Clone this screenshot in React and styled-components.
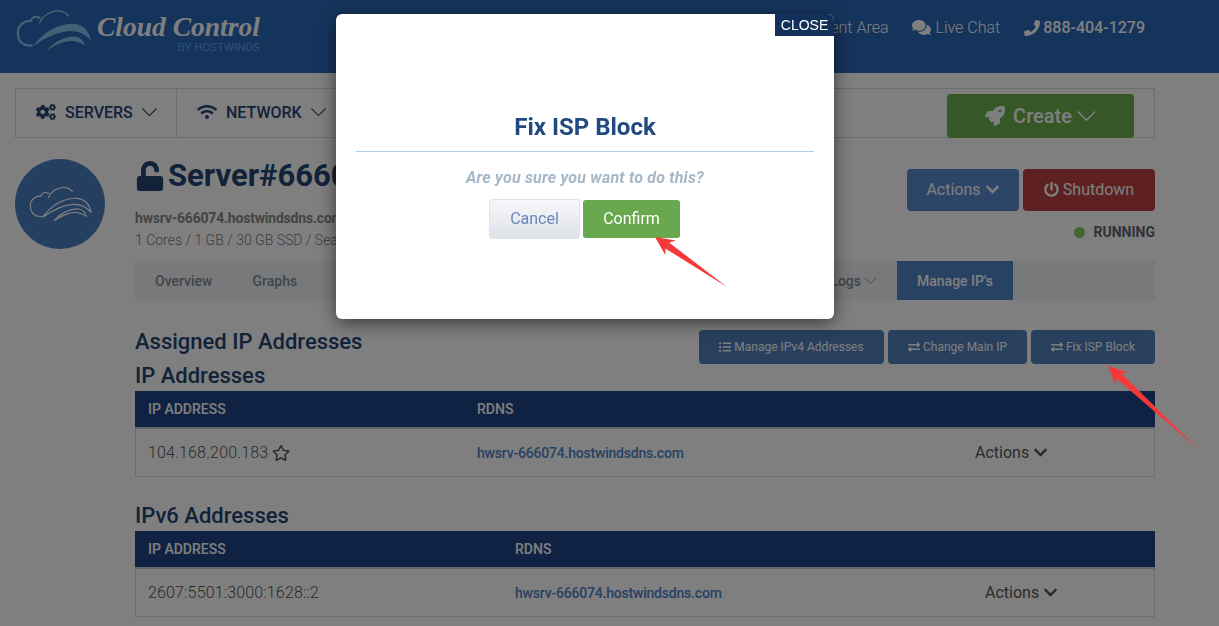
import React from "react";
import styled, { createGlobalStyle } from "styled-components";
import {
  FaChevronDown,
  FaCogs,
  FaComments,
  FaExchangeAlt,
  FaListUl,
  FaPhone,
  FaPowerOff,
  FaRegStar,
  FaRocket,
  FaUnlock,
  FaWifi,
} from "react-icons/fa";

const GlobalStyle = createGlobalStyle`
  html, body {
    margin: 0;
    height: 626px;
    overflow: hidden;
    background: #ffffff;
    font-family: Roboto, "Liberation Sans", sans-serif;
  }
  * {
    box-sizing: border-box;
  }
`;

const Page = styled.div`
  width: 1219px;
  height: 626px;
  overflow: hidden;
`;

const Header = styled.header`
  height: 73px;
  background: #2a68b8;
  display: flex;
  justify-content: space-between;
  padding: 0 74px 0 15px;
`;

const Logo = styled.div`
  display: flex;
  align-items: flex-start;
  gap: 5px;
  padding-top: 9px;
`;

const LogoText = styled.div`
  display: flex;
  flex-direction: column;
  align-items: flex-end;
`;

const LogoName = styled.span`
  margin-top: 2px;
  font-family: "Liberation Serif", serif;
  font-style: italic;
  font-weight: 700;
  font-size: 27.5px;
  line-height: 31px;
  color: #ffffff;
`;

const LogoBy = styled.span`
  margin-top: -1px;
  font-size: 11.5px;
  line-height: 13px;
  color: #5da2ec;
`;

const HeaderNav = styled.nav`
  display: flex;
  gap: 24px;
  padding-top: 18px;
`;

const HeaderLink = styled.a`
  display: flex;
  align-items: center;
  gap: ${(p) => (p.$bold ? 3 : 4)}px;
  height: 19px;
  font-size: 16px;
  font-weight: ${(p) => (p.$bold ? 500 : 300)};
  color: #ffffff;
  svg {
    font-size: ${(p) => (p.$bold ? 16 : 19)}px;
  }
`;

const NavBar = styled.div`
  margin: 15px 64px 0 15px;
  height: 50px;
  border: 1px solid #d8d8d8;
  display: flex;
  padding-right: 20px;
`;

const NavItem = styled.div`
  width: ${(p) => p.$width}px;
  display: flex;
  align-items: center;
  gap: 9px;
  padding: 0 0 2px 20px;
  border-right: 1px solid #dcdcdc;
  font-size: 16px;
  font-weight: 500;
  color: #234473;
  svg {
    flex: none;
  }
`;

const CreateButton = styled.button`
  margin: 5px 0 -1px auto;
  width: 187px;
  border: 0;
  border-radius: 4px;
  background: #6cb04c;
  color: #ffffff;
  font: 500 20px Roboto, sans-serif;
  display: flex;
  align-items: center;
  justify-content: center;
  gap: 8px;
  svg:last-child {
    margin-left: -3px;
  }
`;

const ServerRow = styled.section`
  display: flex;
  gap: 30px;
  padding: 21px 64px 0 15px;
`;

const Avatar = styled.div`
  flex: none;
  width: 90px;
  height: 90px;
  border-radius: 50%;
  background: #4a7ec0;
  display: flex;
  align-items: center;
  justify-content: center;
`;

const ServerBody = styled.div`
  flex: 1;
  min-width: 0;
`;

const ServerTop = styled.div`
  display: flex;
  justify-content: space-between;
  height: 102px;
`;

const ServerTitle = styled.h1`
  margin: 0;
  display: flex;
  align-items: center;
  gap: 3px;
  font-size: 31px;
  line-height: 34px;
  font-weight: 700;
  color: #234473;
  white-space: nowrap;
`;

const HostName = styled.div`
  margin-top: 16px;
  font-size: 14px;
  line-height: 18px;
  font-weight: 700;
  letter-spacing: -0.2px;
  color: #888888;
`;

const Specs = styled.div`
  margin-top: 4px;
  font-size: 14px;
  line-height: 18px;
  font-weight: 300;
  color: #777777;
`;

const ServerActions = styled.div`
  padding-top: 10px;
  display: flex;
  flex-direction: column;
  align-items: flex-end;
`;

const ActionRow = styled.div`
  display: flex;
  gap: 4px;
`;

const ActionButton = styled.button`
  width: ${(p) => p.$width}px;
  height: 42px;
  border: 0;
  border-radius: 4px;
  padding: 0 0 2px;
  background: ${(p) => p.$bg};
  color: #ffffff;
  font: 400 16px Roboto, sans-serif;
  display: flex;
  align-items: center;
  justify-content: center;
  gap: 4px;
`;

const Status = styled.div`
  margin-top: 13px;
  display: flex;
  align-items: center;
  gap: 9px;
  font-size: 14px;
  line-height: 16px;
  font-weight: 700;
  color: #5c6470;
`;

const StatusDot = styled.span`
  width: 11px;
  height: 11px;
  border-radius: 50%;
  background: #7fce5e;
`;

const Tabs = styled.div`
  height: 39px;
  background: #f1f3f5;
  display: flex;
`;

const TabGroup = styled.div`
  width: 762px;
  display: flex;
`;

const Tab = styled.div`
  padding: 0 20px;
  display: flex;
  align-items: center;
  gap: 3px;
  font-size: 14px;
  font-weight: 500;
  color: #848b93;
  margin-left: ${(p) => (p.$push ? "auto" : "0")};
  background: ${(p) => (p.$active ? "#5084c8" : "transparent")};
  ${(p) => p.$active && "color: #ffffff; width: 116px; justify-content: center;"}
`;

const Content = styled.main`
  padding: 30px 64px 0 135px;
`;

const SectionHead = styled.div`
  display: flex;
  justify-content: space-between;
  align-items: flex-start;
  height: 34px;
`;

const Heading = styled.h2`
  margin: 0;
  font-size: 22px;
  line-height: 23px;
  font-weight: 500;
  color: #234473;
`;

const SubHeading = styled(Heading)`
  padding-bottom: 4px;
`;

const ToolButtons = styled.div`
  display: flex;
  gap: 4px;
`;

const ToolButton = styled.button`
  width: ${(p) => p.$width}px;
  height: 34px;
  border: 0;
  border-radius: 4px;
  background: #5080bc;
  color: #ffffff;
  font: 400 12px Roboto, sans-serif;
  display: flex;
  align-items: center;
  justify-content: center;
  gap: 3px;
`;

const Table = styled.div`
  margin-bottom: 27px;
`;

const TableHead = styled.div`
  height: 38px;
  display: grid;
  grid-template-columns: ${(p) => p.$cols};
  align-items: center;
  background: #1f4586;
  border-bottom: 2px solid #c8d0da;
  font-size: 14px;
  font-weight: 500;
  color: #ffffff;
`;

const TableRow = styled.div`
  height: 48px;
  display: grid;
  grid-template-columns: ${(p) => p.$cols};
  align-items: center;
  border: 1px solid #dddddd;
  border-top: 0;
  font-size: 16px;
  font-weight: 300;
  color: #555555;
`;

const Cell = styled.div`
  padding-left: 12px;
  display: flex;
  align-items: center;
  gap: 4px;
  letter-spacing: 0.15px;
`;

const HeadCell = styled(Cell)`
  padding-left: 13px;
  letter-spacing: 0;
`;

const RdnsLink = styled.a`
  padding-left: 12px;
  font-size: 14px;
  font-weight: 500;
  letter-spacing: -0.2px;
  color: #4f82c6;
`;

const RowActions = styled.div`
  display: flex;
  align-items: center;
  gap: 4px;
  font-weight: 400;
`;

const Backdrop = styled.div`
  position: fixed;
  inset: 0;
  background: rgba(0, 0, 0, 0.5);
`;

const Modal = styled.div`
  position: fixed;
  left: 336px;
  top: 14px;
  width: 498px;
  height: 305px;
  background: #ffffff;
  border-radius: 6px;
  box-shadow: 0 4px 18px rgba(0, 0, 0, 0.55);
  padding: 98px 20px 0;
  display: flex;
  flex-direction: column;
  align-items: center;
`;

const CloseTab = styled.button`
  position: absolute;
  top: 0;
  right: 0;
  width: 59px;
  height: 22px;
  border: 0;
  border-radius: 0 6px 0 0;
  padding: 0;
  background: #12305a;
  color: #ffffff;
  font: 400 14px "Liberation Sans", sans-serif;
`;

const ModalTitle = styled.h3`
  margin: 0;
  width: 100%;
  height: 40px;
  text-align: center;
  border-bottom: 1px solid #a9cfe6;
  font-size: 24px;
  line-height: 31px;
  font-weight: 700;
  color: #234a80;
`;

const ModalText = styled.p`
  margin: 16px 0 0;
  font-size: 16px;
  line-height: 19px;
  font-style: italic;
  font-weight: 700;
  letter-spacing: 0.2px;
  color: #a5b7c8;
`;

const ModalButtons = styled.div`
  margin: 12px 1px 0 0;
  display: flex;
  align-items: center;
  gap: 3px;
`;

const CancelButton = styled.button`
  width: 91px;
  height: 40px;
  border: 1px solid #e2e4ea;
  border-radius: 3px;
  padding: 0 0 2px;
  background: linear-gradient(#f6f7f9, #dfe2e9);
  color: #6a86bd;
  font: 400 16px Roboto, sans-serif;
`;

const ConfirmButton = styled.button`
  width: 97px;
  height: 38px;
  border: 0;
  border-radius: 3px;
  padding: 0 0 2px;
  background: #6aa84f;
  color: #ffffff;
  font: 400 16px Roboto, sans-serif;
`;

const Annotation = styled.svg`
  position: fixed;
  left: 0;
  top: 0;
  width: 1219px;
  height: 626px;
  pointer-events: none;
`;

const ipCols = "329px 510px 1fr";
const ip6Cols = "367px 482px 1fr";

const ThinChevron = ({ width }) => (
  <svg width={width} height={width / 2 + 1} viewBox="0 0 16 9" fill="none" stroke="currentColor" strokeWidth="1.2">
    <path d="M.5.5 8 8 15.5.5" />
  </svg>
);

const CloudMark = ({ width, color, outlined }) => (
  <svg width={width} viewBox="0 0 78 44">
    <g fill="none" stroke={color} strokeLinecap="round" strokeWidth={outlined ? 1.4 : 2.4}>
      <path d="M16 12C8 12 2 18 3 25C3 33 9 38 17 37" />
      <path d="M16 12C17 8 21 7 25 9" />
      <path d="M25 14C28 6 38 1 46 2C50 3 53 5 54 7" strokeWidth={outlined ? 1.4 : 1.5} />
    </g>
    <g fill={outlined ? "none" : color} stroke={outlined ? color : "none"} strokeWidth="1.4" strokeLinejoin="round">
      <path d="M18 38C28 24 44 14 60 15C69 16 75 22 77 32C70 24 60 21 50 23C38 25 28 31 18 38Z" />
      <path d="M32 42C40 33 52 27 62 28C67 29 70 33 71 37C64 32 56 31 48 34C42 36 37 39 32 42Z" />
    </g>
  </svg>
);

const Arrow = ({ tipX, tipY, tailX, tailY }) => {
  // barbed arrow pointing from the tail back to the tip
  const dx = tipX - tailX;
  const dy = tipY - tailY;
  const len = Math.hypot(dx, dy);
  const ux = dx / len;
  const uy = dy / len;
  const at = (along, side) => `${tipX - ux * along - uy * side},${tipY - uy * along + ux * side}`;
  return (
    <polygon
      fill="#f5393a"
      points={[
        `${tipX},${tipY}`,
        at(19, 9),
        at(15, 3.5),
        `${tailX},${tailY}`,
        at(15, -3.5),
        at(19, -9),
      ].join(" ")}
    />
  );
};

const App = () => {
  return (
    <Page>
      <GlobalStyle />
      <Header>
        <Logo>
          <CloudMark width={77} color="#7fc4e8" />
          <LogoText>
            <LogoName>Cloud Control</LogoName>
            <LogoBy>BY HOSTWINDS</LogoBy>
          </LogoText>
        </Logo>
        <HeaderNav>
          <HeaderLink>Client Area</HeaderLink>
          <HeaderLink>
            <FaComments />
            Live Chat
          </HeaderLink>
          <HeaderLink $bold>
            <FaPhone />
            888-404-1279
          </HeaderLink>
        </HeaderNav>
      </Header>

      <NavBar>
        <NavItem $width={161}>
          <FaCogs size={20} />
          SERVERS
          <ThinChevron width={15} />
        </NavItem>
        <NavItem $width={180}>
          <FaWifi size={20} />
          NETWORK
          <ThinChevron width={15} />
        </NavItem>
        <CreateButton>
          <FaRocket size={20} />
          Create
          <ThinChevron width={19} />
        </CreateButton>
      </NavBar>

      <ServerRow>
        <Avatar>
          <CloudMark width={64} color="#ffffff" outlined />
        </Avatar>
        <ServerBody>
          <ServerTop>
            <div>
              <ServerTitle>
                <FaUnlock size={30} />
                Server#666074
              </ServerTitle>
              <HostName>hwsrv-666074.hostwindsdns.com</HostName>
              <Specs>1 Cores / 1 GB / 30 GB SSD / Seattle</Specs>
            </div>
            <ServerActions>
              <ActionRow>
                <ActionButton $width={112} $bg="#5a8cd0">
                  Actions
                  <FaChevronDown size={15} />
                </ActionButton>
                <ActionButton $width={132} $bg="#bc4040">
                  <FaPowerOff size={15} />
                  Shutdown
                </ActionButton>
              </ActionRow>
              <Status>
                <StatusDot />
                RUNNING
              </Status>
            </ServerActions>
          </ServerTop>
          <Tabs>
            <TabGroup>
              <Tab>Overview</Tab>
              <Tab>Graphs</Tab>
              <Tab $push>
                Logs
                <ThinChevron width={13} />
              </Tab>
            </TabGroup>
            <Tab $active>Manage IP's</Tab>
          </Tabs>
        </ServerBody>
      </ServerRow>

      <Content>
        <SectionHead>
          <Heading>Assigned IP Addresses</Heading>
          <ToolButtons>
            <ToolButton $width={185}>
              <FaListUl size={12} />
              Manage IPv4 Addresses
            </ToolButton>
            <ToolButton $width={139}>
              <FaExchangeAlt size={12} />
              Change Main IP
            </ToolButton>
            <ToolButton $width={124}>
              <FaExchangeAlt size={12} />
              Fix ISP Block
            </ToolButton>
          </ToolButtons>
        </SectionHead>
        <SubHeading>IP Addresses</SubHeading>
        <Table>
          <TableHead $cols={ipCols}>
            <HeadCell>IP ADDRESS</HeadCell>
            <HeadCell>RDNS</HeadCell>
          </TableHead>
          <TableRow $cols={ipCols}>
            <Cell>
              104.168.200.183
              <FaRegStar size={18} />
            </Cell>
            <RdnsLink>hwsrv-666074.hostwindsdns.com</RdnsLink>
            <RowActions>
              Actions
              <FaChevronDown size={15} />
            </RowActions>
          </TableRow>
        </Table>
        <SubHeading>IPv6 Addresses</SubHeading>
        <Table>
          <TableHead $cols={ip6Cols}>
            <HeadCell>IP ADDRESS</HeadCell>
            <HeadCell>RDNS</HeadCell>
          </TableHead>
          <TableRow $cols={ip6Cols}>
            <Cell>2607:5501:3000:1628::2</Cell>
            <RdnsLink>hwsrv-666074.hostwindsdns.com</RdnsLink>
            <RowActions>
              Actions
              <FaChevronDown size={15} />
            </RowActions>
          </TableRow>
        </Table>
      </Content>

      <Backdrop />
      <Modal>
        <CloseTab>CLOSE</CloseTab>
        <ModalTitle>Fix ISP Block</ModalTitle>
        <ModalText>Are you sure you want to do this?</ModalText>
        <ModalButtons>
          <CancelButton>Cancel</CancelButton>
          <ConfirmButton>Confirm</ConfirmButton>
        </ModalButtons>
      </Modal>
      <Annotation viewBox="0 0 1219 626">
        <Arrow tipX={655} tipY={237} tailX={727} tailY={287} />
        <Arrow tipX={1108} tipY={366} tailX={1198} tailY={449} />
      </Annotation>
    </Page>
  );
};

export default App;
